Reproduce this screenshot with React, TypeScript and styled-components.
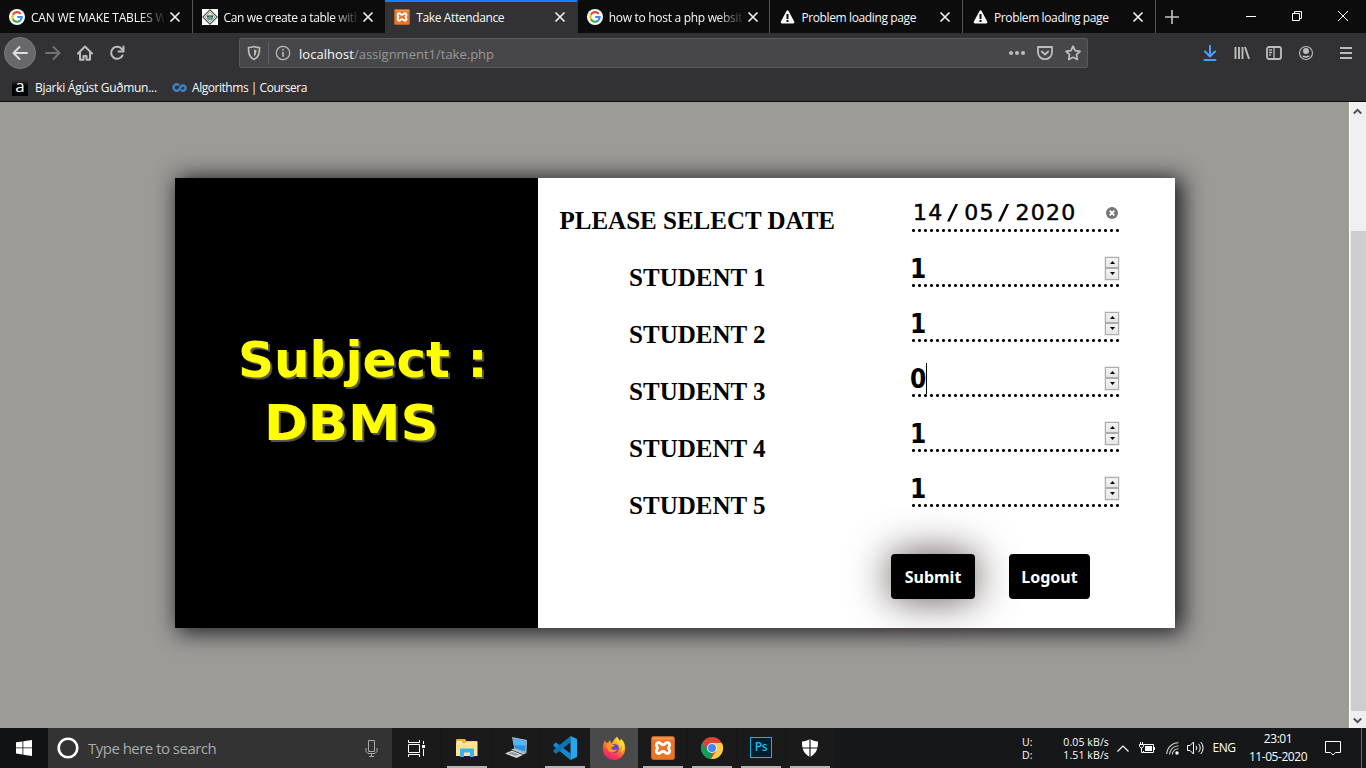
import React from 'react';
import styled, { createGlobalStyle, css } from 'styled-components';

const Global = createGlobalStyle`
  * { box-sizing: border-box; }
  body { margin: 0; overflow: hidden; background: #9d9b97; }
  svg { display: block; flex: none; }
`;

const Screen = styled.div`
  width: 1366px; height: 768px; display: flex; flex-direction: column;
  font-family: "Open Sans", "Noto Sans", sans-serif; overflow: hidden;
`;

/* ---------- browser chrome ---------- */
const TabStrip = styled.div`
  display: flex; height: 33px; background: #0c0c0d; flex: none;
`;
const Tab = styled.div<{ $active?: boolean; $line?: boolean }>`
  width: 192.6px; height: 33px; display: flex; align-items: center; padding: 1px 9px 0 9px;
  border-right: 1px solid ${p => (p.$line ? '#56565a' : 'transparent')};
  ${p => p.$active && css`background: #323234; box-shadow: inset 0 2px #0a84ff;`}
`;
const TabTitle = styled.div<{ $ls: number; $fade?: boolean }>`
  width: 133px; margin-left: 6px; overflow: hidden; white-space: nowrap; color: #f9f9fa;
  font-size: 12px; line-height: 18px; letter-spacing: ${p => p.$ls}px; padding-top: 1px;
  ${p => p.$fade && css`mask-image: linear-gradient(to right, #000 108px, transparent 136px);`}
`;
const CloseSlot = styled.div`margin-left: 5px; display: flex;`;
const NewTab = styled.div`
  width: 32px; display: flex; align-items: center; justify-content: center;
`;
const WindowControls = styled.div`margin-left: auto; display: flex; height: 32px;`;
const WinButton = styled.div`
  width: 46px; display: flex; align-items: center; justify-content: center;
`;
const NavBar = styled.div`
  height: 40px; background: #323234; display: flex; align-items: center; padding: 0 0 0 4px; flex: none;
`;
const NavCell = styled.div<{ $round?: boolean; $w?: number }>`
  width: ${p => p.$w ?? 32}px; height: 32px; flex: none; display: flex; align-items: center; justify-content: center;
  ${p => p.$round && css`background: #68686a; border: 1px solid #7c7c7e; border-radius: 50%; margin-right: 1px;`}
`;
const UrlBar = styled.div`
  width: 849px; height: 30px; margin: 0 106px 0 106px; background: #474749; border: 1px solid #5a5a5c; flex: none;
  border-radius: 2px; display: flex; align-items: center; padding: 0 6px;
`;
const UrlDivider = styled.div`width: 1px; height: 22px; background: #5f6069; margin: 0 6px;`;
const UrlText = styled.div`
  flex: 1; margin-left: 8px; font-size: 13px; line-height: 20px; letter-spacing: 0;
  color: #97979a; padding-top: 2px; white-space: nowrap;
`;
const Host = styled.span`color: #f9f9fa; letter-spacing: 0.05px;`;
const UrlActions = styled.div`display: flex; gap: 12px;`;
const ToolDivider = styled.div`width: 1px; height: 34px; background: #5a5a5d; margin-left: 3px;`;
const BookmarkBar = styled.div`
  height: 29px; background: #323234; border-bottom: 1px solid #0c0c0d; display: flex; align-items: center;
  padding: 1px 0 0 12px; flex: none; font-size: 12px; color: #f9f9fa;
`;
const BookmarkIcon = styled.div<{ $gap: number }>`margin-right: ${p => p.$gap}px;`;
const BookmarkText = styled.div<{ $w: number; $ls: number }>`
  width: ${p => p.$w}px; letter-spacing: ${p => p.$ls}px; white-space: nowrap; line-height: 18px; padding-top: 1px;
`;

/* ---------- page ---------- */
const Viewport = styled.div`display: flex; height: 626px; flex: none;`;
const Page = styled.div`flex: 1; background: #9d9b97; padding: 76px 0 0 175px; overflow: hidden;`;
const Card = styled.div`
  width: 1000px; height: 450px; display: flex; background: #fff;
  box-shadow: 5px 2px 22px 2px #1a171c;
`;
const SubjectPanel = styled.div`
  width: 363px; background: #000; display: flex; flex-direction: column; padding: 151px 0 0 63px;
  font-family: "DejaVu Sans", sans-serif; font-weight: 700; font-size: 50px; line-height: 63px;
  color: #ff0; text-shadow: 2px 2px 1px #5c5858;
`;
const SubjectLine = styled.div<{ $indent?: number; $stretch?: number }>`
  margin-left: ${p => p.$indent ?? 0}px; white-space: nowrap; height: 63px;
  transform: scaleX(${p => p.$stretch ?? 1}); transform-origin: left;
`;
const FormPanel = styled.div`flex: 1; display: flex; align-items: flex-start;`;
const Labels = styled.div`
  width: 318px; padding: 14px 0 0 0.5px; text-align: center;
  font: 700 25px/57px "Liberation Serif", serif; color: #000;
`;
const LabelRow = styled.div`height: 57px; white-space: nowrap;`;
const Fields = styled.div`padding: 15px 0 0 55px; width: 319px;`;
const Field = styled.div`
  width: 208px; height: 39px; margin-bottom: 16px; padding-bottom: 1px; display: flex;
  align-items: center; justify-content: space-between; font-family: "DejaVu Sans", sans-serif; color: #000;
  background: radial-gradient(circle at 2.5px 1.5px, #000 1.1px, transparent 1.9px) 0 100% / 6px 3px repeat-x;
`;
const DateValue = styled.div`
  display: flex; font-size: 22px; letter-spacing: 1.3px; padding: 1px 0 0 2px; line-height: 30px;
  -webkit-text-stroke: 0.5px #000;
`;
const Slash = styled.span`
  width: 20.6px; text-align: center; padding-right: 1px; transform: scaleX(1.5); -webkit-text-stroke: 0;
`;
const ClearIcon = styled.svg`margin-top: 2px;`;
const NumberValue = styled.div<{ $focused?: boolean }>`
  font-size: 26px; font-weight: 700; line-height: 30px; margin: 3px 0 0 -1px; height: 31px; padding-top: 1px;
  font-family: "DejaVu Sans Condensed", "DejaVu Sans", sans-serif; font-stretch: condensed;
  ${p => p.$focused && css`border-right: 1px solid #000;`}
`;
const Spinner = styled.div`
  width: 16px; height: 25px; border: 1px solid #ececec; display: flex; flex-direction: column; margin: 2px -1px 0 0;
`;
const SpinButton = styled.div`
  flex: 1; border: 1px solid #acacac; background: linear-gradient(#f3f3f3, #e6e6e6);
  display: flex; align-items: center; justify-content: center;
`;
const Actions = styled.div`display: flex; gap: 34px; margin: 47px 0 0 -20px;`;
const ActionButton = styled.div<{ $w: number; $hover?: boolean }>`
  width: ${p => p.$w}px; height: 45px; background: #000; border-radius: 4px; color: #fff;
  display: flex; align-items: center; justify-content: center;
  font: 700 16px/20px "Noto Sans", sans-serif; letter-spacing: 0;
  ${p => p.$hover && css`box-shadow: 0 0 40px #5a4b4b;`}
`;
const Scrollbar = styled.div`
  width: 17px; background: #f0f0f0; border-left: 1px solid #fff; display: flex; flex-direction: column; align-items: center;
`;
const ScrollArrow = styled.div`height: 17px; display: flex; align-items: center; padding: 1px 1px 0 0;`;
const ScrollTrack = styled.div`flex: 1; width: 15px; padding-top: 112px;`;
const ScrollThumb = styled.div`height: 480px; background: #cdcdcd;`;

/* ---------- taskbar ---------- */
const Taskbar = styled.div`height: 40px; background: #161718; display: flex; flex: none; color: #fff;`;
const StartButton = styled.div`width: 48px; background: #101214; display: flex; align-items: center; justify-content: center;`;
const SearchBox = styled.div`
  width: 344px; background: #333; display: flex; align-items: center; padding: 0 14px 0 9px;
`;
const SearchText = styled.div`
  flex: 1; margin-left: 9px; color: #aaa; font-size: 15px; letter-spacing: -0.52px; white-space: nowrap; padding-bottom: 1px;
`;
const AppCell = styled.div<{ $open?: boolean; $active?: boolean; $gap?: number }>`
  width: 48px; height: 40px; margin-right: ${p => p.$gap ?? 1}px; display: flex; align-items: center; justify-content: center;
  background: ${p => (p.$active ? '#4a4a4a' : '#1a1a1a')};
  ${p => p.$open && css`
    background: linear-gradient(#b2b2b0, #b2b2b0) bottom center / 40px 2px no-repeat, #1a1a1a;
  `}
`;
const Tray = styled.div`margin-left: auto; display: flex; align-items: center;`;
const NetSpeed = styled.div`width: 87px; font-size: 10.5px; line-height: 13px; margin: 0 8px 0 0; padding-top: 1px;`;
const NetRow = styled.div`display: flex; justify-content: space-between; letter-spacing: 0.12px; white-space: nowrap;`;
const TrayIcon = styled.div<{ $w: number }>`width: ${p => p.$w}px; display: flex; justify-content: center;`;
const Lang = styled.div`width: 24px; font-size: 12px; letter-spacing: -0.5px; text-align: center; padding-bottom: 1px;`;
const Clock = styled.div`
  width: 84px; text-align: center; font-size: 12px; line-height: 18px; letter-spacing: -0.45px; padding-bottom: 1px;
`;
const DesktopEdge = styled.div`width: 1px; height: 40px; background: #6b6b6b; margin: 0 4px 0 15px;`;

/* ---------- icons ---------- */
const Google = () => (
  <svg width="16" height="16" viewBox="0 0 16 16">
    <circle cx="8" cy="8" r="8" fill="#fff" />
    <g fill="none" strokeWidth="2.1">
      <path d="M11.7 4.8A4.7 4.7 0 0 0 3.9 5.7" stroke="#ea4335" />
      <path d="M3.9 5.7a4.9 4.9 0 0 0 0 4.6" stroke="#fbbc05" />
      <path d="M3.9 10.3a4.7 4.7 0 0 0 7.2 1.3" stroke="#34a853" />
      <path d="M11.1 11.6A4.6 4.6 0 0 0 12.7 8H8.2" stroke="#4285f4" />
    </g>
  </svg>
);
const GfgIcon = () => (
  <svg width="16" height="16" viewBox="0 0 16 16">
    <rect width="16" height="16" fill="#fff" />
    <path d="M8 .8 15.2 8 8 15.2.8 8Z" fill="none" stroke="#464c48" strokeWidth="1.1" />
    <path d="M8 3 13 8l-5 5-5-5Z" fill="#dce5de" stroke="#7f8a82" strokeWidth=".7" />
    <path d="M5 6h6v3.5L9.5 11h-3L5 9.5Z" fill="#6c9d7d" />
    <path d="M5 7h2v1H5zM9 7h2v1H9z" fill="#284f38" />
  </svg>
);
const Xampp = ({ size }: { size: number }) => (
  <svg width={size} height={size} viewBox="0 0 24 24">
    <rect x=".5" y=".5" width="23" height="23" rx="2" fill="#ec7424" stroke="#b9642d" />
    <path d="M1.5 1.5h21v2h-21z" fill="#f09a62" />
    <path d="M7.700 6.500c2.200 0 2.300 2.300 4.300 2.300s2.100-2.300 4.300-2.300a2.500 2.500 0 0 1 2.200 3.300c-.4 1-1 1.200-1 2.200s.6 1.200 1 2.200a2.500 2.500 0 0 1-2.200 3.300c-2.200 0-2.300-2.300-4.300-2.300s-2.100 2.300-4.300 2.300a2.500 2.500 0 0 1-2.200-3.300c.4-1 1-1.200 1-2.200s-.6-1.200-1-2.200a2.500 2.500 0 0 1 2.200-3.300Z" fill="none" stroke="#fff" strokeWidth="2.900" strokeLinejoin="round" />
  </svg>
);
const Warning = () => (
  <svg width="16" height="16" viewBox="0 0 16 16">
    <path d="M7.500 1.900a1.200 1.200 0 0 1 2.100 0l5.600 10.700c.5 1-.1 2-1.100 2H3c-1 0-1.600-1-1.100-2Z" fill="#f9f9fa" />
    <path d="M7.500 5h2v5h-2zM7.500 11h2v2h-2z" fill="#0c0c0d" />
  </svg>
);
const Cross = () => (
  <svg width="12" height="12" viewBox="0 0 12 12"><path d="m1.500 1.500 9 9m0-9-9 9" stroke="#efeff0" strokeWidth="1.700" /></svg>
);
const ScrollChevron = ({ d }: { d: string }) => (
  <svg width="9" height="7" viewBox="0 0 9 7"><path d={d} fill="none" stroke="#505050" strokeWidth="2" /></svg>
);
const Icon = ({ children, s = 16, c = '#bdbdbe' }: { children: React.ReactNode; s?: number; c?: string }) => (
  <svg width={s} height={s} viewBox="0 0 16 16" fill="none" stroke={c} strokeWidth="2" strokeLinecap="round" strokeLinejoin="round">{children}</svg>
);

const tabs = [
  { title: 'CAN WE MAKE TABLES WITH', icon: <Google />, ls: -0.2, fade: true, line: true },
  { title: 'Can we create a table with', icon: <GfgIcon />, ls: -0.38, fade: true },
  { title: 'Take Attendance', icon: <Xampp size={16} />, ls: -0.37, active: true },
  { title: 'how to host a php website', icon: <Google />, ls: -0.3, fade: true, line: true },
  { title: 'Problem loading page', icon: <Warning />, ls: -0.38, line: true },
  { title: 'Problem loading page', icon: <Warning />, ls: -0.38, line: true },
];

const ExplorerIcon = () => (
  <svg width="22" height="20" viewBox="0 0 22 20">
    <path d="M0 2.500Q0 1 1 1h8l1.500 2H21v15H0Z" fill="#e9b63d" />
    <path d="M1 3h5v2H1z" fill="#fff3c0" />
    <path d="M0 5h9.500L11 3.500h10.500V18H0Z" fill="#ffe394" />
    <path d="M4 10.500h14V19h-4v-4.500H8V19H4Z" fill="#38b2e8" />
  </svg>
);
const LaptopIcon = () => (
  <svg width="24" height="22" viewBox="0 0 24 22">
    <path d="m8 0 15 3-.5 13-12-3.500Z" fill="#a9b7c0" />
    <path d="m9 1.300 12.800 2.600-.5 10.500-10.400-3Z" fill="#2695e5" />
    <path d="m9 1.300 12.800 2.600-.2 4.600L10 8Z" fill="#55b6f4" />
    <path d="m7 12.500 3-1 12.500 4.500-3 1.500Z" fill="#b8c0c5" />
    <path d="m1 16.500 7-3 11 4.500-6.500 3Z" fill="#d2d5d7" />
    <path d="m4 16.500 4-1.500 7 2.500-3.500 1.300Z" fill="#929a9f" />
  </svg>
);
const CodeIcon = () => (
  <svg width="24" height="24" viewBox="0 0 24 24">
    <path d="M.5 8 3 6.500 17.500 17.500V24L.5 10Z" fill="#1688ce" />
    <path d="M.5 16 3 17.800 17.500 6.500V0L.5 14Z" fill="#0c73b7" />
    <path d="M17.500 0 24 3v18l-6.500 3Z" fill="#25a5ee" />
  </svg>
);
const FirefoxIcon = () => (
  <svg width="24" height="24" viewBox="0 0 24 24">
    <defs><linearGradient id="fx" x1=".8" y1="0" x2=".25" y2="1"><stop stopColor="#ffe43a" /><stop offset=".4" stopColor="#ff9b24" /><stop offset=".75" stopColor="#fb3750" /><stop offset="1" stopColor="#e32487" /></linearGradient></defs>
    <path d="M15 .8c1.200 1.200 2 2.500 2.300 4 1-.4 1.500-1.300 1.700-2.100C22 5.500 23.400 9 23.200 12.500A11.200 11.200 0 0 1 .8 13C.7 9.500 1.700 6.800 3 4.500L4.200 7l2-.5L8 4l1 3.500c2-1 3-4.500 6-6.700Z" fill="url(#fx)" />
    <circle cx="12.300" cy="12.500" r="4.600" fill="#7340c6" />
    <path d="M4 10c1.500-2 4-3 6-2l3 1.500c-1 1.300-3.500 1-3.700 2.700.5 2 4.500 2.300 6.300.5-1 4-7 4.700-9.500 1.500Z" fill="#ff9a20" />
    <path d="M14.500 2c-1 4 3.500 5 3 10 1.500-1 2-3 1.500-4.500 2 3.500 1.500 7-.5 9 4-1.500 5-7 2-12l-2 1.500c-1-1-1-3-4-4Z" fill="#ffda35" />
  </svg>
);
const ChromeIcon = () => (
  <svg width="22" height="22" viewBox="0 0 22 22">
    <circle cx="11" cy="11" r="11" fill="#db4437" />
    <path d="M1.500 5.500 6.700 13.500 11 15.500 10 22A11 11 0 0 1 1.500 5.500Z" fill="#0f9d58" />
    <path d="M11 6h9.800A11 11 0 0 1 10 22l5.300-8.500Z" fill="#ffcd40" />
    <circle cx="11" cy="11" r="5" fill="#f1f1f1" /><circle cx="11" cy="11" r="4" fill="#4285f4" />
  </svg>
);
const PsTile = styled.div`
  width: 22px; height: 21px; border: 1.500px solid #10b8e8; background: #001d2b; color: #18bdec;
  font-size: 12px; font-weight: 600; line-height: 18px; text-align: center; letter-spacing: -0.4px; margin-top: -2px;
`;
const FavLetter = styled.div`
  width: 16px; height: 16px; background: linear-gradient(#333, #050505 40%); color: #fff; font-size: 17px; line-height: 12px; text-align: center;
`;

export default function App() {
  return (
    <Screen>
      <Global />
      <TabStrip>
        {tabs.map((t, i) => (
          <Tab key={i} $active={t.active} $line={t.line}>
            {t.icon}
            <TabTitle $ls={t.ls} $fade={t.fade}>{t.title}</TabTitle>
            <CloseSlot><Cross /></CloseSlot>
          </Tab>
        ))}
        <NewTab><svg width="14" height="14"><path d="M7 0v14M0 7h14" stroke="#c4c4c5" strokeWidth="1.600" /></svg></NewTab>
        <WindowControls>
          <WinButton><svg width="10" height="10"><path d="M0 5.500h10" stroke="#fff" /></svg></WinButton>
          <WinButton><svg width="10" height="10" fill="none" stroke="#fff"><path d="M.5 2.500h7v7h-7zM2.500 2V.5h7v7H8" /></svg></WinButton>
          <WinButton><svg width="10" height="10"><path d="m0 0 10 10M10 0 0 10" stroke="#fff" /></svg></WinButton>
        </WindowControls>
      </TabStrip>

      <NavBar>
        <NavCell $round><Icon c="#dededf"><path d="M15 8H1.500M7.500 2 1.500 8l6 6" /></Icon></NavCell>
        <NavCell><Icon c="#727274"><path d="M1 8h13.500M8.500 2l6 6-6 6" /></Icon></NavCell>
        <NavCell><Icon><path d="M1 8.500 8 1.500l7 7M3 8v6.800h3.500V11h3v3.800H13V8" /></Icon></NavCell>
        <NavCell><Icon><path d="M13.500 10.500A6 6 0 1 1 13 4.300M14.500 1.500v5h-5" /></Icon></NavCell>
        <UrlBar>
          <Icon><path d="M8 1.500c2 .7 3.500 1 5.500 1C13.500 8 13 12 8 14.500 3 12 2.500 8 2.500 2.500c2 0 3.500-.3 5.500-1Z" strokeWidth="1.700" /><path d="M8 4.500v7c2-1.500 2.500-4 2.500-6.500Z" fill="#bdbdbe" stroke="none" /></Icon>
          <UrlDivider />
          <Icon><circle cx="8" cy="8" r="6.700" strokeWidth="1.200" /><path d="M8 7.500v3.800" strokeWidth="1.600" /><path d="M8 4.700v.1" strokeWidth="1.700" /></Icon>
          <UrlText><Host>localhost</Host>/assignment1/take.php</UrlText>
          <UrlActions>
            <Icon><g fill="#bdbdbe" stroke="none"><circle cx="2" cy="8" r="2" /><circle cx="8" cy="8" r="2" /><circle cx="14" cy="8" r="2" /></g></Icon>
            <Icon><path d="M1 2h14v5.500a7 6.700 0 0 1-14 0Z" strokeWidth="1.800" /><path d="m4.800 6.500 3.200 3 3.200-3" strokeWidth="1.800" /></Icon>
            <Icon><path d="m8 1.200 2.100 4.400 4.900.7-3.500 3.400.8 4.900L8 12.300l-4.300 2.300.8-4.900L1 6.300l4.900-.7Z" strokeWidth="1.700" /></Icon>
          </UrlActions>
        </UrlBar>
        <NavCell><Icon c="#45a1ff"><path d="M8 .8v10M3 6.500l5 5 5-5M2.500 15h11" /></Icon></NavCell>
        <NavCell><Icon><path d="M1.500 2v12M5 2v12M8.500 2v12M11 2l4 12" strokeWidth="1.900" strokeLinecap="butt" /></Icon></NavCell>
        <NavCell><Icon><rect x="1" y="2" width="14" height="12" rx="2" strokeWidth="1.800" /><path d="M8 2v12M3.500 5h2M3.500 7.500h2M3.500 10h1" strokeWidth="1.300" /></Icon></NavCell>
        <NavCell><Icon><circle cx="8" cy="8" r="6.500" strokeWidth="1.100" /><circle cx="8" cy="6" r="3" fill="#bdbdbe" stroke="none" /><path d="M3.500 10.500c2 .5 7 .5 9 0A5.500 5.500 0 0 1 3.500 10.500Z" fill="#bdbdbe" stroke="none" /></Icon></NavCell>
        <ToolDivider />
        <NavCell $w={42}><Icon><path d="M2 3h12M2 8h12M2 13h12" strokeLinecap="butt" /></Icon></NavCell>
      </NavBar>

      <BookmarkBar>
        <BookmarkIcon $gap={7}><FavLetter>a</FavLetter></BookmarkIcon>
        <BookmarkText $w={136} $ls={-0.28}>Bjarki Ágúst Guðmun...</BookmarkText>
        <BookmarkIcon $gap={5}>
          <svg width="16" height="16" viewBox="0 0 16 16" fill="none" stroke="#3f82c4" strokeWidth="2.400"><path d="M8.200 5.500A3.200 3.200 0 1 0 8.200 9.500L10 6.500a2.600 2.600 0 1 1 0 3.200" /></svg>
        </BookmarkIcon>
        <BookmarkText $w={130} $ls={-0.46}>Algorithms | Coursera</BookmarkText>
      </BookmarkBar>

      <Viewport>
        <Page>
          <Card>
            <SubjectPanel>
              <SubjectLine>Subject :</SubjectLine>
              <SubjectLine $indent={26} $stretch={1.055}>DBMS</SubjectLine>
            </SubjectPanel>
            <FormPanel>
              <Labels>
                <LabelRow>PLEASE SELECT DATE</LabelRow>
                {[1, 2, 3, 4, 5].map(n => <LabelRow key={n}>STUDENT {n}</LabelRow>)}
              </Labels>
              <Fields>
                <Field>
                  <DateValue>14<Slash>/</Slash>05<Slash>/</Slash>2020</DateValue>
                  <ClearIcon width="14" height="14" viewBox="0 0 14 14"><circle cx="7" cy="7" r="6" fill="#767676" /><path d="m4.700 4.700 4.600 4.600m0-4.600L4.700 9.300" stroke="#fff" strokeWidth="1.800" /></ClearIcon>
                </Field>
                {['1', '1', '0', '1', '1'].map((v, i) => (
                  <Field key={i}>
                    <NumberValue $focused={i === 2}>{v}</NumberValue>
                    <Spinner>
                      <SpinButton><svg width="5" height="3"><path d="M0 3 2.500 0 5 3Z" /></svg></SpinButton>
                      <SpinButton><svg width="5" height="3"><path d="M0 0h5L2.500 3Z" /></svg></SpinButton>
                    </Spinner>
                  </Field>
                ))}
                <Actions>
                  <ActionButton $w={84} $hover>Submit</ActionButton>
                  <ActionButton $w={81}>Logout</ActionButton>
                </Actions>
              </Fields>
            </FormPanel>
          </Card>
        </Page>
        <Scrollbar>
          <ScrollArrow><ScrollChevron d="m.8 5.500 3.700-3.700 3.700 3.700" /></ScrollArrow>
          <ScrollTrack><ScrollThumb /></ScrollTrack>
          <ScrollArrow><ScrollChevron d="m.8 1.500 3.700 3.700 3.700-3.700" /></ScrollArrow>
        </Scrollbar>
      </Viewport>

      <Taskbar>
        <StartButton><svg width="16" height="16" viewBox="0 0 16 16" fill="#fff"><path d="M0 2.300 6.500 1.400V7.500H0zM7.300 1.200 16 0v7.500H7.300zM0 8.300h6.500v6.200L0 13.600zM7.300 8.300H16V16l-8.700-1.200z" /></svg></StartButton>
        <SearchBox>
          <svg width="22" height="22"><circle cx="11" cy="11" r="9.300" fill="none" stroke="#fff" strokeWidth="2.600" /></svg>
          <SearchText>Type here to search</SearchText>
          <svg width="13" height="17" fill="none" stroke="#a8a8a8"><path d="M3.500.5h6v11h-6zM1 8v3.500l2 2h7l2-2V8M6.500 13.500v3M4 16.500h5" /></svg>
        </SearchBox>
        <AppCell $gap={3}>
          <svg width="17" height="17" fill="none" stroke="#fff"><path d="M.5 4.500h11v8H.5zM.5 0v2.500h11V0M.5 17v-2.500h11V17M15.500 1v3M15.500 9v7" /><path d="M14 5h3v3h-3z" fill="#fff" stroke="none" /></svg>
        </AppCell>
        <AppCell $open><ExplorerIcon /></AppCell>
        <AppCell><LaptopIcon /></AppCell>
        <AppCell $open><CodeIcon /></AppCell>
        <AppCell $active><FirefoxIcon /></AppCell>
        <AppCell $open><Xampp size={24} /></AppCell>
        <AppCell $open><ChromeIcon /></AppCell>
        <AppCell $open><PsTile>Ps</PsTile></AppCell>
        <AppCell $open>
          <svg width="18" height="18" viewBox="0 0 18 18"><path d="M9 0c2.500 1.500 5 2.200 8 2.500C17.200 10 15 15 9 18 3 15 .8 10 1 2.500 4 2.200 6.500 1.500 9 0Z" fill="#fff" /><path d="M9 0v18M0 9h18" stroke="#1a1a1a" strokeWidth="1.200" /></svg>
        </AppCell>
        <Tray>
          <NetSpeed>
            <NetRow><span>U:</span><span>0.05 kB/s</span></NetRow>
            <NetRow><span>D:</span><span>1.51 kB/s</span></NetRow>
          </NetSpeed>
          <TrayIcon $w={12}><svg width="12" height="7"><path d="m.5 6.500 5.500-5.500 5.500 5.500" fill="none" stroke="#fff" strokeWidth="1.200" /></svg></TrayIcon>
          <TrayIcon $w={36}><svg width="16" height="12" fill="none" stroke="#fff"><path d="M5 2.500h9.500v8h-10V9M1.500 0v2M3.500 0v2M.5 2.500h4v2L3 6H2L.5 4.500ZM2.500 6v4.500h2" /><path d="M6 4h7v5H6zM15 5h1v3h-1z" fill="#fff" stroke="none" /></svg></TrayIcon>
          <TrayIcon $w={14}><svg width="13" height="13" fill="none" stroke="#c8c8c8" strokeWidth="1.100"><path d="M.8 12A11.500 11.500 0 0 1 12.500.8M3.500 12.500a9 9 0 0 1 9-8.700M6.300 12.500a6 6 0 0 1 6.200-5.700" /><circle cx="11" cy="11" r="1.700" fill="#fff" stroke="none" /></svg></TrayIcon>
          <TrayIcon $w={33}><svg width="17" height="14" fill="none" stroke="#fff"><path d="M.5 4.500h2.500l3.500-3.500v12L3 9.500H.5ZM9 4.800a3.500 3.500 0 0 1 0 4.400M11.500 2.800a6 6 0 0 1 0 8.400M13.800 1a9 9 0 0 1 0 12" /></svg></TrayIcon>
          <Lang>ENG</Lang>
          <Clock>23:01<br />11-05-2020</Clock>
          <TrayIcon $w={26}><svg width="16" height="16" fill="none" stroke="#fff"><path d="M.5 1.500h15v11h-5L8 15 5.500 12.500h-5Z" /></svg></TrayIcon>
          <DesktopEdge />
        </Tray>
      </Taskbar>
    </Screen>
  );
}
